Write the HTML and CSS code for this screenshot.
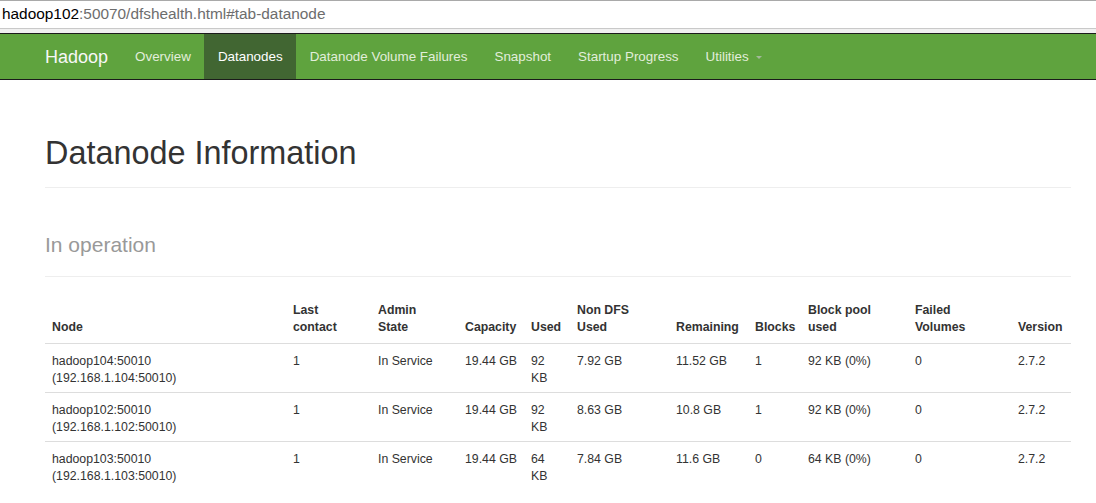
FILE: index.html
```
<!DOCTYPE html>
<html>
<head>
<meta charset="utf-8">
<title>Namenode information</title>
<link rel="stylesheet" href="styles.css">
</head>
<body>
<div class="addr"><span class="host">hadoop102</span><span class="path">:50070/dfshealth.html#tab-datanode</span></div>
<div class="addr-gap"></div>
<nav class="navbar">
  <a class="brand" href="#">Hadoop</a>
  <ul class="nav">
    <li><a href="#">Overview</a></li>
    <li class="active"><a href="#">Datanodes</a></li>
    <li><a href="#">Datanode Volume Failures</a></li>
    <li><a href="#">Snapshot</a></li>
    <li><a href="#">Startup Progress</a></li>
    <li><a href="#">Utilities <span class="caret"></span></a></li>
  </ul>
</nav>
<main class="container">
  <h1 class="page-header">Datanode Information</h1>
  <h3 class="section-header">In operation</h3>
  <table class="dn-table">
    <colgroup>
      <col class="c-node"><col class="c-last"><col class="c-admin"><col class="c-cap"><col class="c-used"><col class="c-nondfs"><col class="c-rem"><col class="c-blocks"><col class="c-pool"><col class="c-failed"><col class="c-ver">
    </colgroup>
    <thead>
      <tr>
        <th>Node</th>
        <th>Last<br>contact</th>
        <th>Admin<br>State</th>
        <th>Capacity</th>
        <th>Used</th>
        <th>Non DFS<br>Used</th>
        <th>Remaining</th>
        <th>Blocks</th>
        <th>Block pool<br>used</th>
        <th>Failed<br>Volumes</th>
        <th>Version</th>
      </tr>
    </thead>
    <tbody>
      <tr>
        <td>hadoop104:50010<br>(192.168.1.104:50010)</td>
        <td>1</td><td>In Service</td><td>19.44 GB</td><td class="wrap">92 KB</td><td>7.92 GB</td><td>11.52 GB</td><td>1</td><td>92 KB (0%)</td><td>0</td><td>2.7.2</td>
      </tr>
      <tr>
        <td>hadoop102:50010<br>(192.168.1.102:50010)</td>
        <td>1</td><td>In Service</td><td>19.44 GB</td><td class="wrap">92 KB</td><td>8.63 GB</td><td>10.8 GB</td><td>1</td><td>92 KB (0%)</td><td>0</td><td>2.7.2</td>
      </tr>
      <tr>
        <td>hadoop103:50010<br>(192.168.1.103:50010)</td>
        <td>1</td><td>In Service</td><td>19.44 GB</td><td class="wrap">64 KB</td><td>7.84 GB</td><td>11.6 GB</td><td>0</td><td>64 KB (0%)</td><td>0</td><td>2.7.2</td>
      </tr>
    </tbody>
  </table>
</main>
</body>
</html>
```
FILE: styles.css
```
* { box-sizing: border-box; }
html, body { margin: 0; padding: 0; background: #fff; }
body {
  font-family: "Liberation Sans", Arial, sans-serif;
  color: #333;
  overflow: hidden;
}
.addr {
  height: 29px;
  border-top: 1px solid #a9a9a9;
  border-bottom: 1px solid #c9c9c9;
  padding-left: 2px;
  font-size: 15.4px;
  line-height: 26px;
  white-space: nowrap;
}
.addr .host { color: #000; }
.addr .path { color: #6d6d6d; }
.addr-gap {
  height: 4px;
  background: #f0f0f0;
}
.navbar {
  display: flex;
  align-items: center;
  height: 47px;
  background: #5fa33e;
  border-top: 1px solid #1b1b1b;
  border-bottom: 1px solid #1b1b1b;
  padding-left: 45px;
}
.brand {
  color: #f7f7f7;
  font-size: 18px;
  text-decoration: none;
  margin-right: 13.5px;
  line-height: 46px;
  padding-top: 1px;
}
.nav {
  display: flex;
  list-style: none;
  margin: 0;
  padding: 0;
  height: 45px;
}
.nav li a {
  display: block;
  height: 45px;
  line-height: 44px;
  padding: 1px 13.5px 0;
  font-size: 13.4px;
  color: #e2eedb;
  text-decoration: none;
  white-space: nowrap;
}
.nav li.active a {
  background: #416632;
  color: #fff;
}
.caret {
  display: inline-block;
  width: 0;
  height: 0;
  margin-left: 4px;
  vertical-align: middle;
  border-top: 3px solid #a3b99a;
  border-left: 3px solid transparent;
  border-right: 3px solid transparent;
}
.container {
  padding: 0 25px 0 45px;
}
.page-header {
  font-size: 32.4px;
  font-weight: normal;
  line-height: 36px;
  margin: 55px 0 0;
  padding-bottom: 16px;
  border-bottom: 1px solid #eee;
  color: #333;
}
.section-header {
  font-size: 21px;
  font-weight: normal;
  line-height: 24px;
  color: #999;
  margin: 45px 0 0;
  padding-bottom: 19px;
  border-bottom: 1px solid #eee;
}
.dn-table {
  width: 100%;
  table-layout: fixed;
  border-collapse: collapse;
  margin-top: 18px;
  font-size: 12.3px;
  line-height: 17px;
}
.dn-table th, .dn-table td {
  padding: 7px;
  text-align: left;
  vertical-align: top;
  white-space: nowrap;
}
.dn-table th {
  vertical-align: bottom;
  font-weight: bold;
  border-bottom: 1px solid #ddd;
}
.dn-table td {
  border-top: 1px solid #ddd;
  padding-top: 9px;
  padding-bottom: 5px;
}
.dn-table tbody tr:first-child td { border-top: 0; }
.dn-table td.wrap { white-space: normal; }
.c-node { width: 241px; }
.c-last { width: 85px; }
.c-admin { width: 87px; }
.c-cap { width: 66px; }
.c-used { width: 46px; }
.c-nondfs { width: 99px; }
.c-rem { width: 79px; }
.c-blocks { width: 53px; }
.c-pool { width: 107px; }
.c-failed { width: 103px; }
.c-ver { width: 60px; }
```
